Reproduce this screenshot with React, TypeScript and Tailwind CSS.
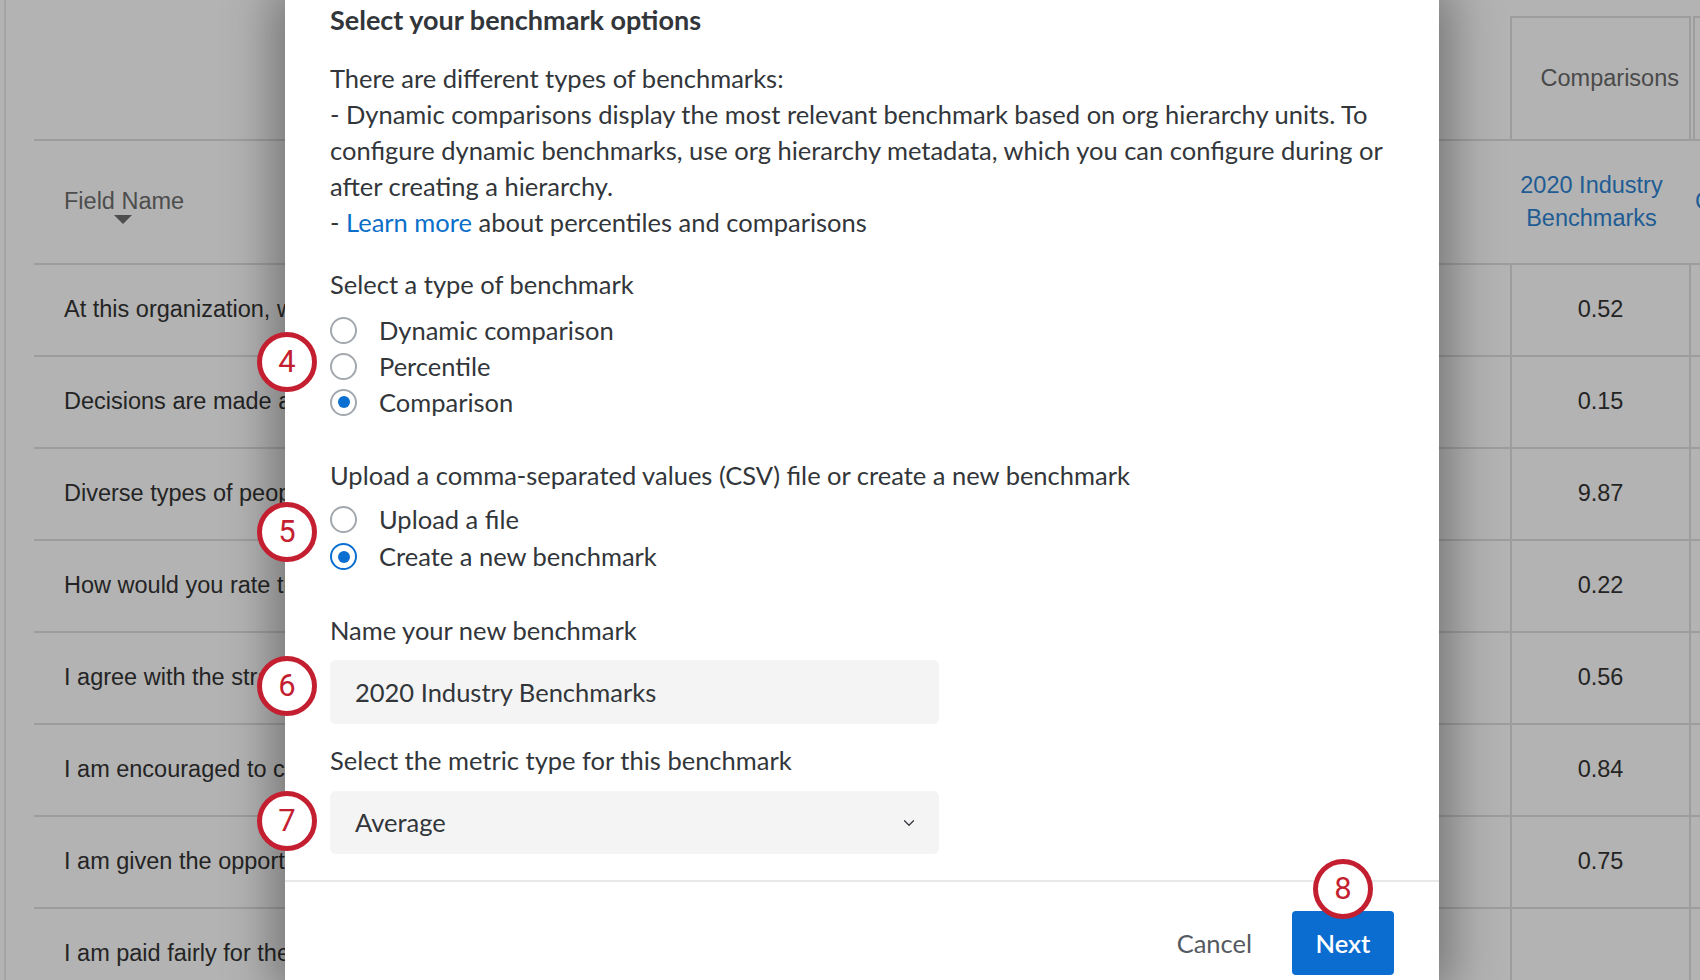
import { ChevronDown } from "lucide-react";

const rows = [
  { label: "At this organization, we value", value: "0.52" },
  { label: "Decisions are made at the right level", value: "0.15" },
  { label: "Diverse types of people are", value: "9.87" },
  { label: "How would you rate the", value: "0.22" },
  { label: "I agree with the strategy", value: "0.56" },
  { label: "I am encouraged to contribute", value: "0.84" },
  { label: "I am given the opportunity", value: "0.75" },
  { label: "I am paid fairly for the work", value: "" },
];

function Radio({ checked, focused, label }: { checked?: boolean; focused?: boolean; label: string }) {
  return (
    <div className="flex h-full items-center">
      <span
        className={`flex h-[27px] w-[27px] shrink-0 items-center justify-center rounded-full border-2 ${
          focused ? "border-[#0b6fd2]" : "border-[#a3a8ae]"
        }`}
      >
        {checked && <span className="h-[12px] w-[12px] rounded-full bg-[#0b6fd2]" />}
      </span>
      <span className="ml-[22px]">{label}</span>
    </div>
  );
}

function Marker({ n, className }: { n: number; className: string }) {
  return (
    <div
      className={`absolute flex h-[60px] w-[60px] items-center justify-center rounded-full border-[5px] border-[#c41f30] bg-white text-[31px] text-[#c41f30] ${className}`}
      style={{ fontFamily: "Roboto, sans-serif" }}
    >
      {n}
    </div>
  );
}

export default function App() {
  return (
    <div
      className="relative flex h-[980px] w-[1700px] overflow-hidden bg-[#b3b3b3] text-[23.5px] text-[#242424]"
      style={{ fontFamily: '"Liberation Sans", Arial, sans-serif' }}
    >
      {/* dimmed table behind the dialog */}
      <div className="flex w-[34px] shrink-0">
        <div className="w-[4px]" />
        <div className="w-[2px] bg-[#a4a4a4]" />
      </div>
      <div className="flex flex-1 flex-col">
        <div className="flex h-[139px] shrink-0 items-end">
          <div className="flex-1" />
          <div className="flex h-[123px] w-[181px] items-center justify-end border-x-2 border-t-2 border-[#9d9d9d] pr-[10px] text-[#4a4a4a]">
            Comparisons
          </div>
          <div className="ml-[2px] h-[123px] w-[7px] border-l-2 border-t-2 border-[#9d9d9d]" />
        </div>
        <div className="flex h-[124px] shrink-0 items-center border-t-2 border-[#9d9d9d]">
          <div className="flex flex-1 flex-col items-start pl-[30px]">
            <div className="relative text-[#4d4d4d]">
              Field Name
              <svg className="absolute left-[50px] top-[31px]" width="18" height="9" viewBox="0 0 18 9">
                <path d="M0 0h18L9 9z" fill="#4d4d4d" />
              </svg>
            </div>
          </div>
          <div className="flex w-[181px] flex-col items-center pr-[18px] leading-[33px] text-[#1f5c94]">
            <span>2020 Industry</span>
            <span>Benchmarks</span>
          </div>
          <div className="w-[9px] overflow-hidden pl-[4px] text-[#1f5c94]">C</div>
        </div>
        {rows.map((r) => (
          <div key={r.label} className="flex h-[92px] shrink-0 border-t-2 border-[#9d9d9d]">
            <div className="flex flex-1 items-center whitespace-nowrap pl-[30px]">{r.label}</div>
            <div className="flex w-[181px] items-center justify-center border-x-2 border-[#9d9d9d]">{r.value}</div>
            <div className="w-[9px]" />
          </div>
        ))}
      </div>

      {/* dialog */}
      <div
        className="absolute left-[285px] top-0 flex h-[980px] w-[1154px] flex-col bg-white text-[25.5px] text-[#32363a] shadow-[0_0_45px_12px_rgba(0,0,0,0.35)]"
        style={{ fontFamily: "Lato, sans-serif" }}
      >
        <div className="flex flex-col px-[45px] pt-[2px]">
          <h2 className="text-[27px] font-bold leading-[36px]">Select your benchmark options</h2>
          <p className="mt-[22px] leading-[36px]">
            There are different types of benchmarks:
            <br />- Dynamic comparisons display the most relevant benchmark based on org hierarchy units. To
            <br />
            configure dynamic benchmarks, use org hierarchy metadata, which you can configure during or
            <br />
            after creating a hierarchy.
            <br />- <span className="text-[#0b6fc9]">Learn more</span> about percentiles and comparisons
          </p>

          <div className="mt-[26px] leading-[36px]">Select a type of benchmark</div>
          <div className="mt-[10px] flex flex-col">
            <div className="h-[36px]">
              <Radio label="Dynamic comparison" />
            </div>
            <div className="h-[36px]">
              <Radio label="Percentile" />
            </div>
            <div className="h-[36px]">
              <Radio label="Comparison" checked />
            </div>
          </div>

          <div className="mt-[37px] leading-[36px]">
            Upload a comma-separated values (CSV) file or create a new benchmark
          </div>
          <div className="mt-[8px] flex flex-col">
            <div className="h-[37px]">
              <Radio label="Upload a file" />
            </div>
            <div className="h-[37px]">
              <Radio label="Create a new benchmark" checked focused />
            </div>
          </div>

          <div className="mt-[37px] leading-[36px]">Name your new benchmark</div>
          <div className="mt-[12px] flex h-[64px] w-[609px] items-center rounded-[6px] bg-[#f4f4f4] px-[25px]">
            2020 Industry Benchmarks
          </div>

          <div className="mt-[18px] leading-[36px]">Select the metric type for this benchmark</div>
          <div className="mt-[13px] flex h-[63px] w-[609px] items-center justify-between rounded-[6px] bg-[#f4f4f4] pl-[25px] pr-[21px]">
            <span>Average</span>
            <ChevronDown size={18} strokeWidth={1.6} color="#32363a" />
          </div>
        </div>

        <div className="mt-[26px] border-t-2 border-[#e8e8e8]" />
        <div className="mt-[29px] flex items-start justify-end gap-[40px] px-[45px]">
          <button className="mt-[14px] text-[25.5px] leading-[36px] text-[#555a60]">Cancel</button>
          <button className="h-[64px] w-[102px] rounded-[4px] bg-[#0b6dd0] text-[25.5px] font-semibold text-white">
            Next
          </button>
        </div>
      </div>

      {/* callout markers */}
      <Marker n={4} className="left-[257px] top-[332px]" />
      <Marker n={5} className="left-[257px] top-[502px]" />
      <Marker n={6} className="left-[257px] top-[656px]" />
      <Marker n={7} className="left-[257px] top-[791px]" />
      <Marker n={8} className="left-[1313px] top-[859px]" />
    </div>
  );
}
